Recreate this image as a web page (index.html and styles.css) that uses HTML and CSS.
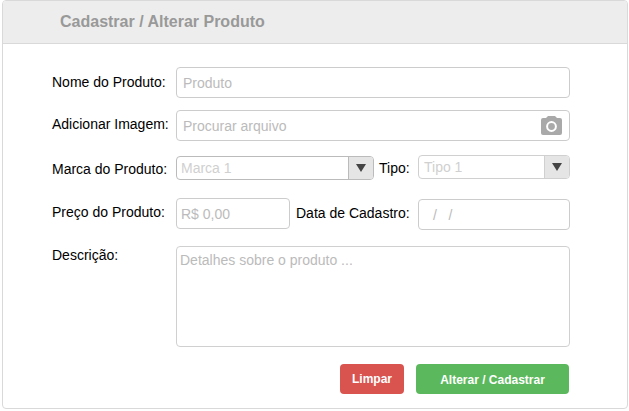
FILE: index.html
```html
<!DOCTYPE html>
<html lang="pt-BR">
<head>
<meta charset="utf-8">
<title>Cadastrar / Alterar Produto</title>
<link rel="stylesheet" href="styles.css">
</head>
<body>
<main class="panel">
  <h1 class="panel-header">Cadastrar / Alterar Produto</h1>
  <form class="form">
    <div class="row row-name">
      <label class="label label-low">Nome do Produto:</label>
      <div class="field grow">Produto</div>
    </div>
    <div class="row row-image">
      <label class="label">Adicionar Imagem:</label>
      <div class="field grow file">
        <span>Procurar arquivo</span>
        <svg class="camera" width="21" height="19" viewBox="0 0 21 19">
          <path fill="#a9a9a9" d="M7 0h7l2 2h3a2 2 0 0 1 2 2v13a2 2 0 0 1-2 2H2a2 2 0 0 1-2-2V4a2 2 0 0 1 2-2h3z"/>
          <circle cx="10.5" cy="10.5" r="4.4" fill="none" stroke="#fff" stroke-width="2"/>
        </svg>
      </div>
    </div>
    <div class="row row-brand">
      <label class="label">Marca do Produto:</label>
      <div class="select select-brand"><span class="value">Marca 1</span><span class="toggle"><i class="arrow"></i></span></div>
      <label class="label label-type">Tipo:</label>
      <div class="select select-type"><span class="value">Tipo 1</span><span class="toggle"><i class="arrow"></i></span></div>
    </div>
    <div class="row row-price">
      <label class="label">Preço do Produto:</label>
      <div class="field price">R$ 0,00</div>
      <label class="label label-date">Data de Cadastro:</label>
      <div class="field date">/&nbsp;&nbsp; /</div>
    </div>
    <div class="row row-description">
      <label class="label label-high">Descrição:</label>
      <div class="field grow description">Detalhes sobre o produto ...</div>
    </div>
    <div class="actions">
      <button type="button" class="button clear">Limpar</button>
      <button type="button" class="button save">Alterar / Cadastrar</button>
    </div>
  </form>
</main>
</body>
</html>
```
FILE: styles.css
```css
* { box-sizing: border-box; }

body {
  margin: 0;
  background: #fff;
  color: #000;
  font: 14px/16px "Liberation Sans", Arial, sans-serif;
}

.panel {
  width: 626px;
  height: 409px;
  margin-left: 2px;
  border: 1px solid #d9d9d9;
  border-radius: 4px;
  overflow: hidden;
}

.panel-header {
  height: 43px;
  margin: 0;
  padding: 12px 57px 0;
  border-bottom: 1px solid #d9d9d9;
  background: #ededed;
  color: #999;
  font-size: 16px;
  line-height: 18px;
}

.form {
  width: 567px;
  padding: 23px 0 0 49px;
}

.row {
  display: flex;
  align-items: flex-start;
}

.row-name { margin-bottom: 12px; }
.row-image { margin-bottom: 14px; }
.row-brand { margin-bottom: 18px; }
.row-price { margin-bottom: 16px; }
.row-description { margin-bottom: 17px; }

.label {
  flex: none;
  width: 124px;
  padding-top: 6px;
  white-space: nowrap;
}

.label-low { padding-top: 7px; }
.label-high { padding-top: 1px; }
.label-type { width: 39px; margin-left: 5px; padding-top: 5px; }
.label-date { width: 122px; margin-left: 6px; padding-top: 7px; }

.field {
  height: 31px;
  padding: 7px 6px;
  border: 1px solid #ccc;
  border-radius: 4px;
  color: #bbb;
  white-space: nowrap;
}

.grow { flex: 1; }

.file {
  display: flex;
  justify-content: space-between;
  padding-right: 7px;
}

.camera { margin-top: -2px; }

.select {
  display: flex;
  height: 24px;
  border: 1px solid #bbb;
  border-radius: 4px;
  color: #d0d0d0;
  overflow: hidden;
}

.select-brand { width: 198px; margin-top: 1px; }
.select-type { width: 152px; border-color: #d0d0d0; }

.value {
  flex: 1;
  padding: 3px 4px;
}

.select-type .value { padding-left: 5px; }

.toggle {
  display: flex;
  justify-content: center;
  width: 25px;
  padding-top: 7px;
  border-left: 1px solid #bbb;
  background: #e5e5e5;
}

.select-type .toggle { border-color: #d0d0d0; }

.arrow {
  width: 0;
  height: 0;
  border: 5px solid transparent;
  border-top: 8px solid #444;
  border-bottom: 0;
}

.price { width: 114px; padding-left: 4px; }
.date { width: 152px; margin-top: 1px; padding-left: 14px; }

.description {
  height: 101px;
  padding: 5px 3px;
  border-color: #d0d0d0;
}

.actions {
  display: flex;
  justify-content: flex-end;
  gap: 12px;
  padding-right: 1px;
}

.button {
  display: block;
  height: 30px;
  padding: 0;
  border: 0;
  border-radius: 4px;
  color: #fff;
  font: bold 12px/14px "Liberation Sans", Arial, sans-serif;
}

.clear { width: 64px; background: #d9534f; }
.save { width: 153px; padding-top: 2px; background: #5cb85c; }
```
